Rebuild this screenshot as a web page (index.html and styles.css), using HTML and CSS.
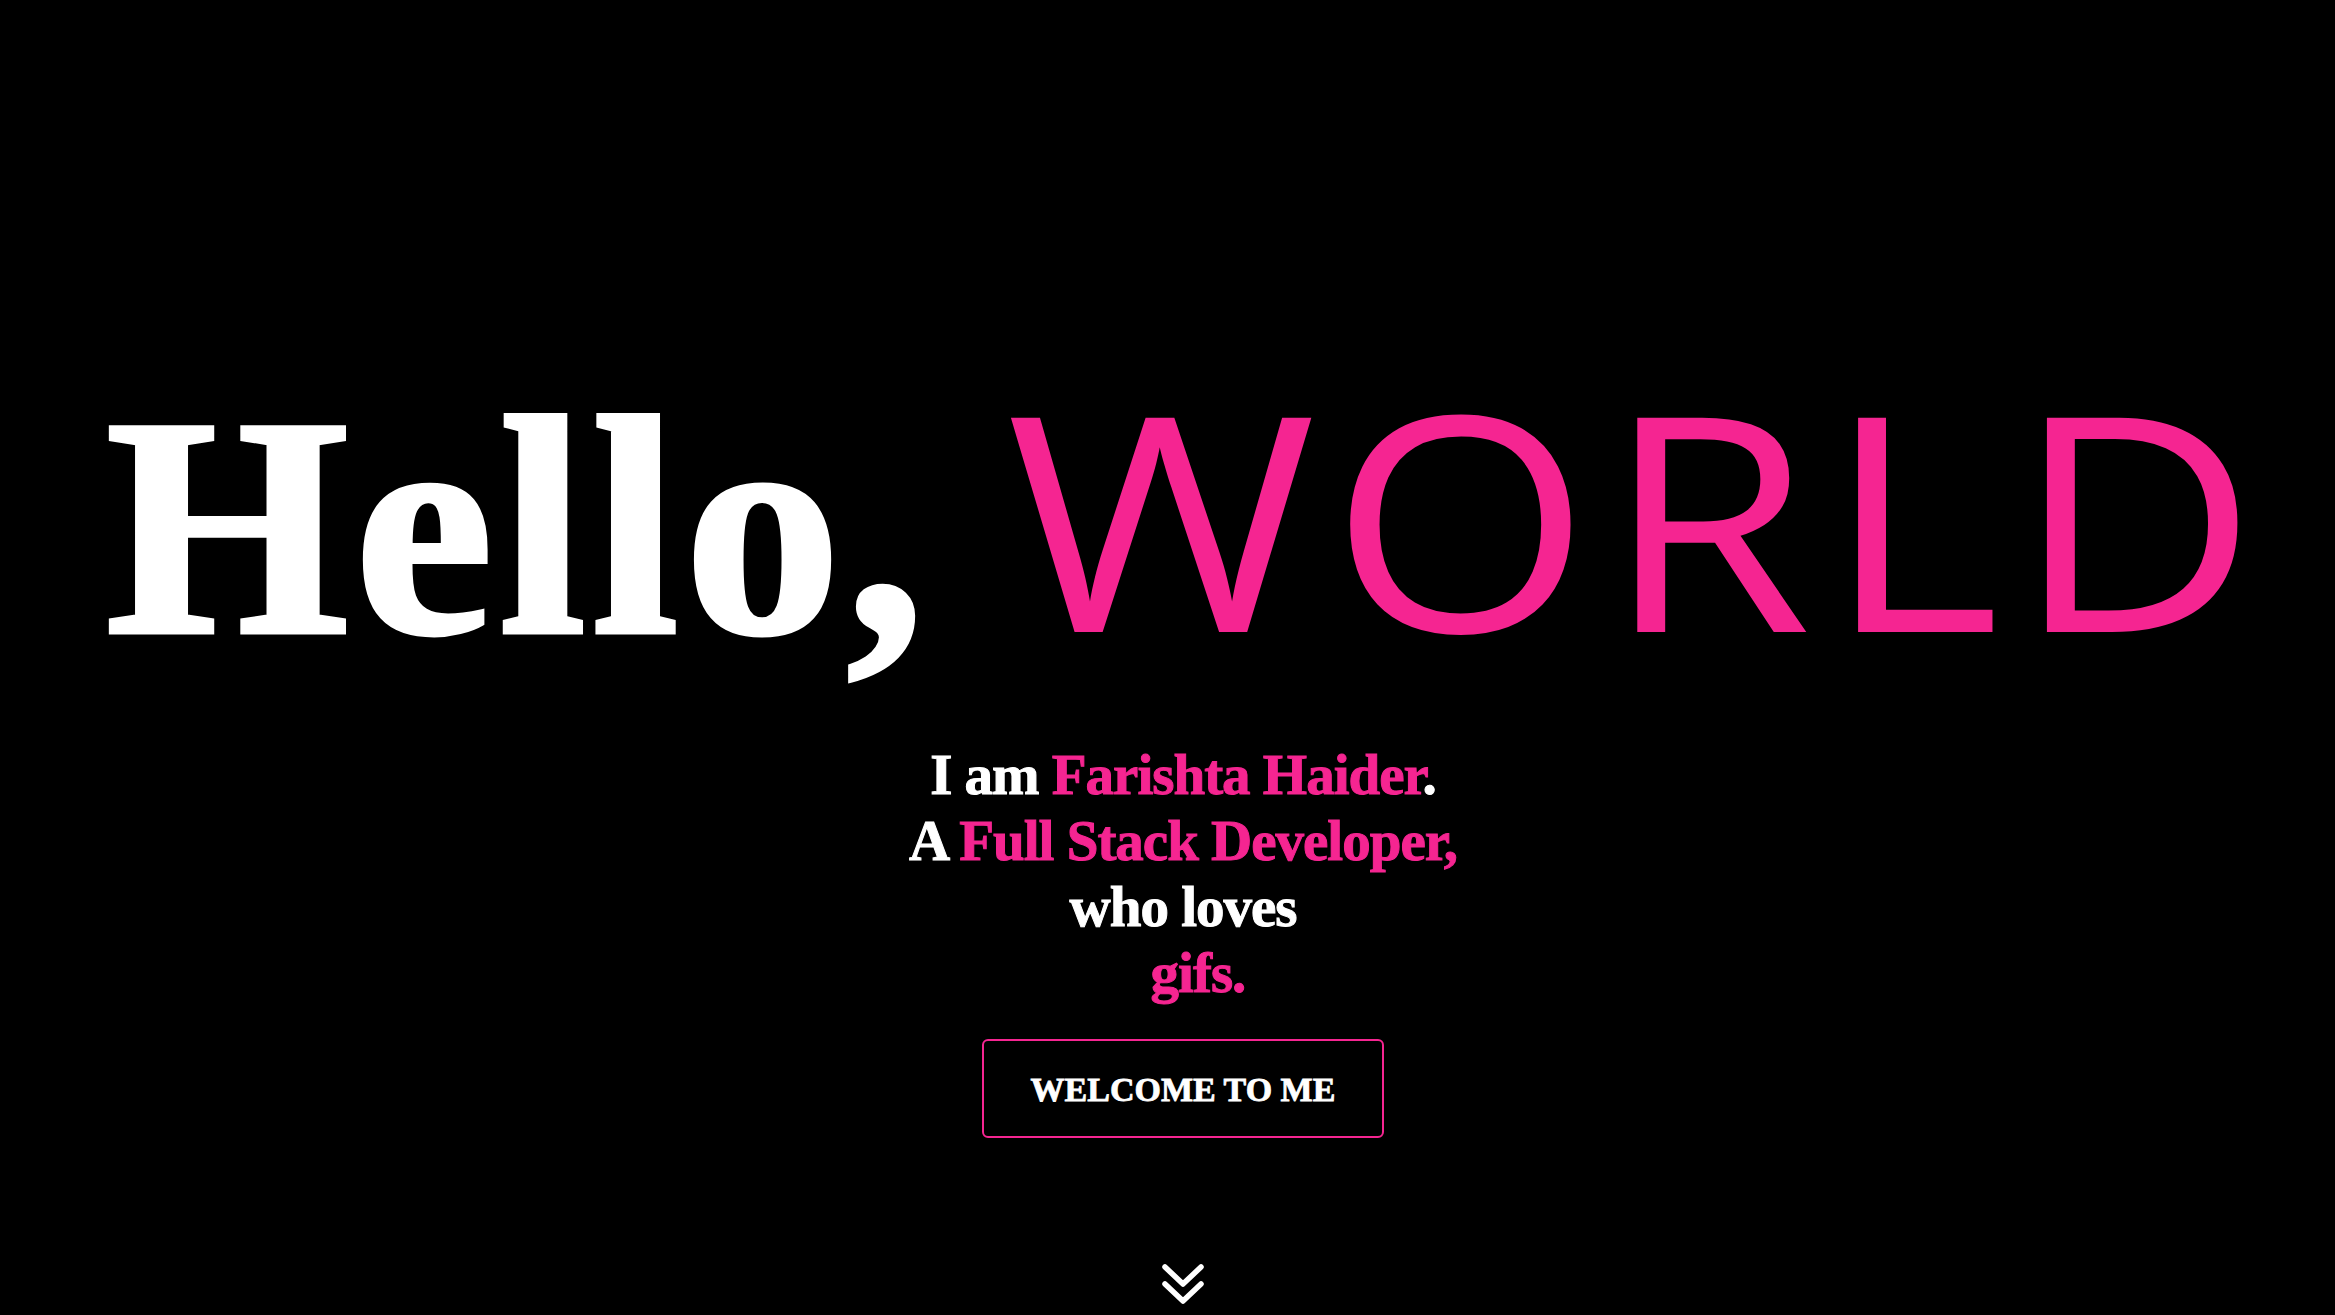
FILE: index.html
```html
<!DOCTYPE html>
<html lang="en">
<head>
<meta charset="utf-8">
<title>Farishta Haider</title>
<link rel="stylesheet" href="styles.css">
</head>
<body>
<main class="hero">
  <h1 class="title"><span class="hello">Hello,</span><span class="world">WORLD</span></h1>
  <p class="intro">
    <span class="line">I am <span class="pink">Farishta Haider</span>.</span>
    <span class="line">A <span class="pink">Full Stack Developer,</span></span>
    <span class="line">who loves</span>
    <span class="line gifs pink">gifs.</span>
  </p>
  <a class="btn" href="#about">WELCOME TO ME</a>
  <a class="scroll" href="#about" aria-label="Scroll down">
    <svg width="44" height="42" viewBox="0 0 44 42" fill="none" stroke="#fff" stroke-width="5.5" stroke-linecap="round" stroke-linejoin="round">
      <path d="M4 4 L22 21 L40 4"/>
      <path d="M4 21 L22 38 L40 21"/>
    </svg>
  </a>
</main>
</body>
</html>
```

FILE: styles.css
```css
html, body {
  margin: 0;
  padding: 0;
  background: #000;
  color: #fff;
}

body {
  font-family: "Liberation Serif", "Times New Roman", serif;
  overflow: hidden;
}

.hero {
  height: 1315px;
  box-sizing: border-box;
  padding-top: 366px;
  padding-left: 31px;
  display: flex;
  flex-direction: column;
  align-items: center;
}

.title {
  margin: 0 0 0 75px;
  align-self: flex-start;
  display: flex;
  align-items: baseline;
  gap: 75px;
  font-weight: normal;
}

.hello {
  font-family: "Liberation Serif", serif;
  font-weight: 700;
  font-size: 312px;
  line-height: 1;
  color: #fff;
  -webkit-text-stroke: 5px #fff;
  letter-spacing: 6px;
}

.world {
  font-family: "Open Sans", sans-serif;
  font-weight: 400;
  font-size: 300px;
  line-height: 1;
  color: #f52591;
  letter-spacing: 12px;
  transform: scaleX(1.12);
  transform-origin: left center;
}

.pink {
  color: #f52591;
}

.intro {
  margin: 59px 0 0;
  display: flex;
  flex-direction: column;
  align-items: center;
  font-size: 57px;
  line-height: 66px;
  font-weight: 700;
  -webkit-text-stroke: 1px currentColor;
  letter-spacing: -1px;
}

.line {
  display: block;
  white-space: nowrap;
}

.gifs {
  padding-left: 30px;
}

.btn {
  margin-top: 33px;
  width: 402px;
  height: 99px;
  box-sizing: border-box;
  border: 2px solid #f52591;
  border-radius: 6px;
  display: flex;
  align-items: center;
  justify-content: center;
  color: #fff;
  text-decoration: none;
  font-weight: 700;
  font-size: 34px;
  -webkit-text-stroke: 0.8px #fff;
  padding-top: 2px;
}

.scroll {
  margin-top: 125px;
  display: block;
  line-height: 0;
}
```
